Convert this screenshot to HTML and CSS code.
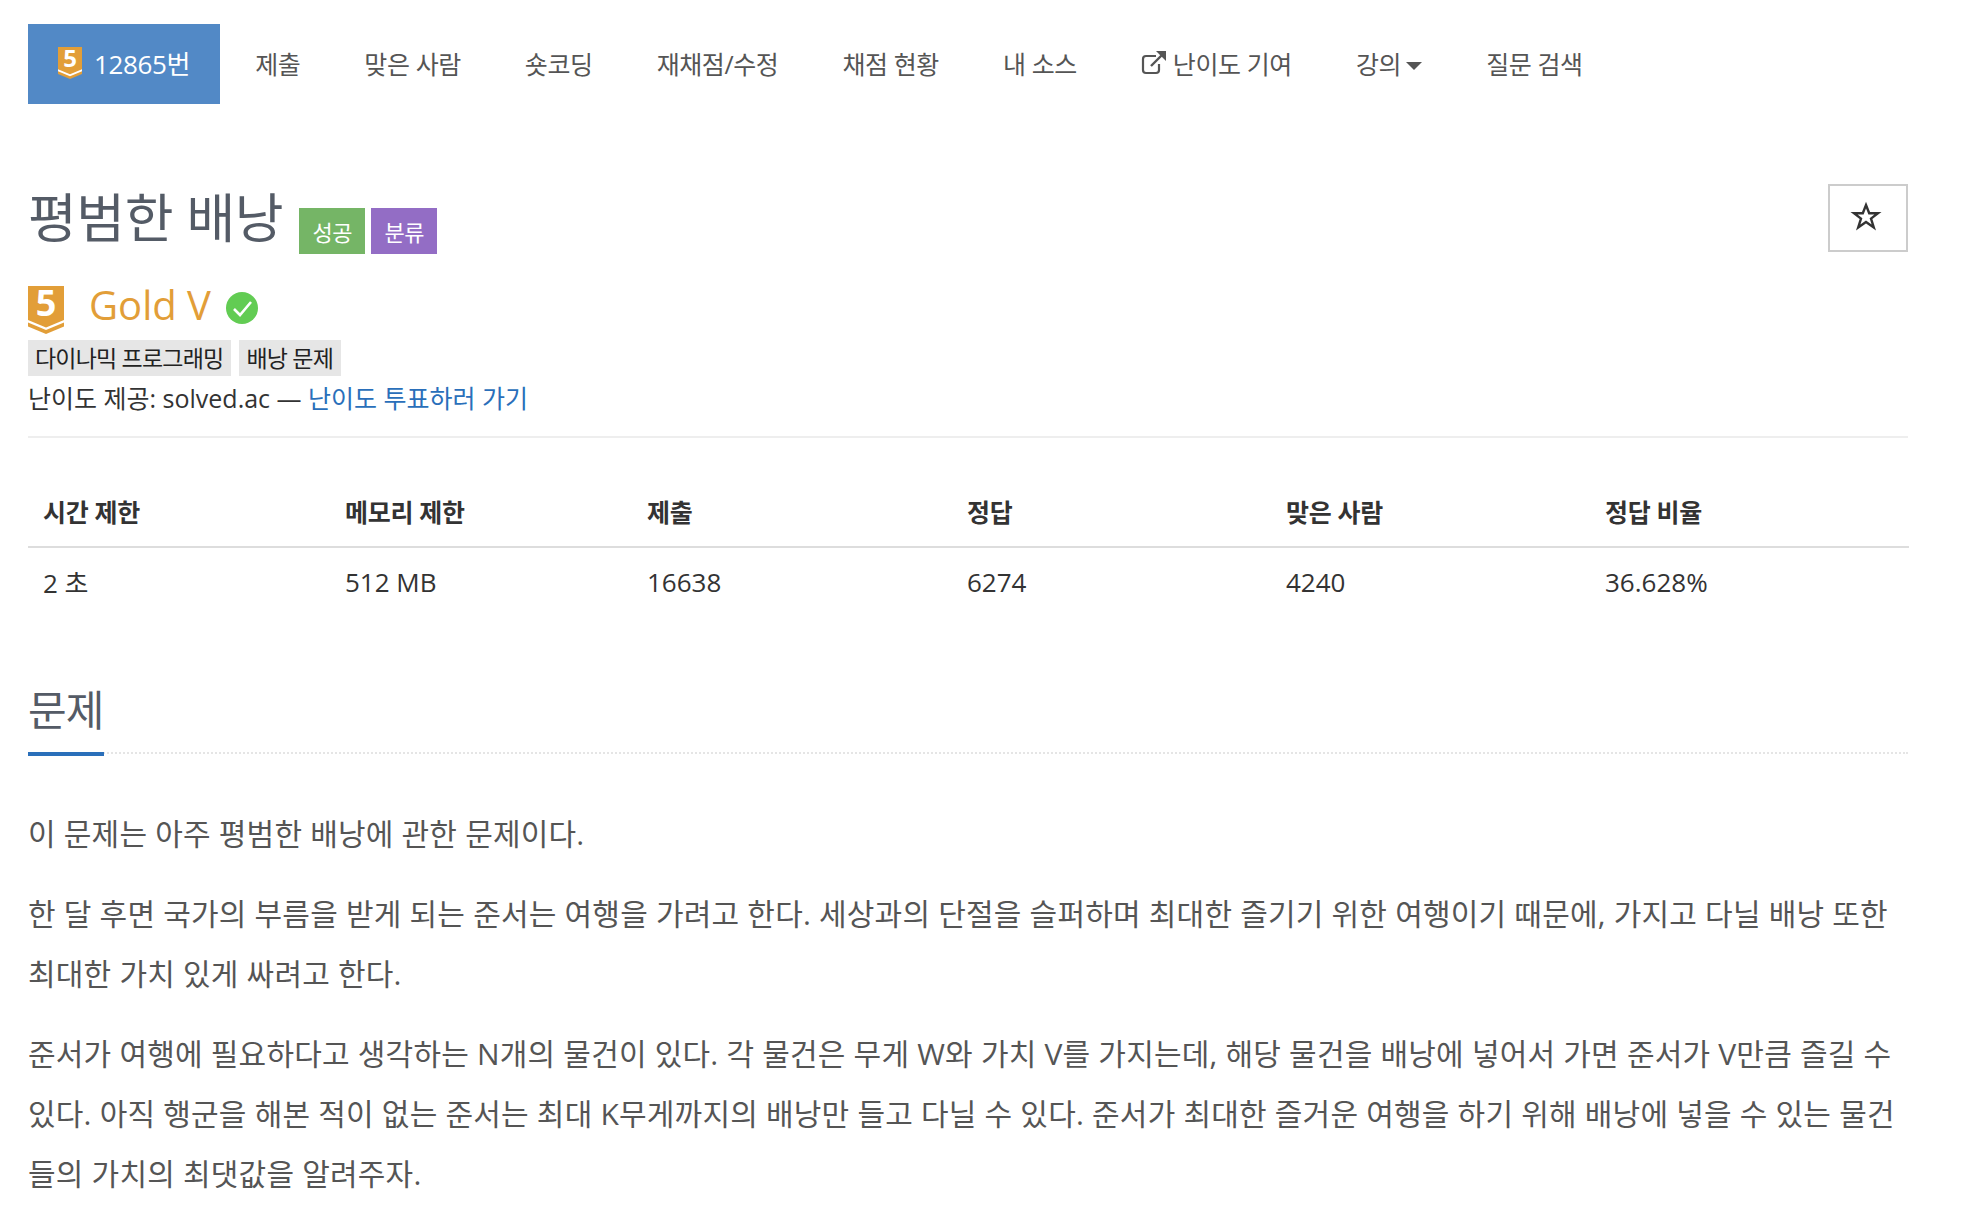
FILE: index.html
```html
<!DOCTYPE html>
<html lang="ko">
<head>
<meta charset="utf-8">
<title>평범한 배낭</title>
<link rel="stylesheet" href="styles.css">
</head>
<body>
<main class="page">
  <nav class="nav">
    <a class="nav-item active">
      <svg class="tier-small" viewBox="0 0 36 48"><path fill="#e29e38" d="M0 0H36V40.5L18 48 0 40.5Z"/><path fill="#fff" d="M0 33.5L18 41 36 33.5V36.5L18 44 0 36.5Z"/><text x="18" y="30" class="tier-num" font-size="36">5</text></svg>
      <span class="problem-id">12865번</span>
    </a>
    <a class="nav-item">제출</a>
    <a class="nav-item">맞은 사람</a>
    <a class="nav-item">숏코딩</a>
    <a class="nav-item">재채점/수정</a>
    <a class="nav-item">채점 현황</a>
    <a class="nav-item">내 소스</a>
    <a class="nav-item">
      <svg class="ext" viewBox="0 0 26 24"><path fill="none" stroke="#555" stroke-width="2.2" d="M15 5H5Q2 5 2 8V19Q2 22 5 22H15Q18 22 18 19V13"/><path fill="none" stroke="#555" stroke-width="2.4" d="M10 15L21 4"/><path fill="#555" d="M15 0H25V10Z"/></svg>
      난이도 기여
    </a>
    <a class="nav-item">강의<span class="caret"></span></a>
    <a class="nav-item">질문 검색</a>
  </nav>

  <header class="title-row">
    <h1 class="title">평범한 배낭</h1>
    <span class="label green">성공</span>
    <span class="label purple">분류</span>
    <button class="star"><svg class="star-icon" viewBox="0 0 30 28"><path fill="none" stroke="#333" stroke-width="2.4" d="M15 3L18.2 11.2H27L20 16.6 22.8 25.4 15 20 7.2 25.4 10 16.6 3 11.2H11.8Z"/></svg></button>
  </header>

  <div class="tier">
    <svg class="tier-big" viewBox="0 0 36 48"><path fill="#e29e38" d="M0 0H36V40.5L18 48 0 40.5Z"/><path fill="#fff" d="M0 34L18 41.5 36 34V36.5L18 44 0 36.5Z"/><text x="18" y="30" class="tier-num" font-size="36">5</text></svg>
    <span class="tier-name">Gold V</span>
    <svg class="check" viewBox="0 0 32 32"><circle cx="16" cy="16" r="16" fill="#62cc53"/><path fill="none" stroke="#fff" stroke-width="2.6" d="M8 17L14 23 25 10"/></svg>
  </div>
  <div class="tags"><span class="tag">다이나믹 프로그래밍</span><span class="tag">배낭 문제</span></div>
  <p class="credit">난이도 제공: solved.ac — <a class="link">난이도 투표하러 가기</a></p>

  <table class="info">
    <thead>
      <tr><th class="c1">시간 제한</th><th class="c1">메모리 제한</th><th class="c3">제출</th><th class="c2">정답</th><th class="c2">맞은 사람</th><th class="c2">정답 비율</th></tr>
    </thead>
    <tbody>
      <tr><td>2 초</td><td>512 MB</td><td>16638</td><td>6274</td><td>4240</td><td>36.628%</td></tr>
    </tbody>
  </table>

  <section class="section">
    <h2 class="section-title"><span class="section-text">문제</span></h2>
    <p class="body-text">이 문제는 아주 평범한 배낭에 관한 문제이다.</p>
    <p class="body-text">한 달 후면 국가의 부름을 받게 되는 준서는 여행을 가려고 한다. 세상과의 단절을 슬퍼하며 최대한 즐기기 위한 여행이기 때문에, 가지고 다닐 배낭 또한 최대한 가치 있게 싸려고 한다.</p>
    <p class="body-text">준서가 여행에 필요하다고 생각하는 N개의 물건이 있다. 각 물건은 무게 W와 가치 V를 가지는데, 해당 물건을 배낭에 넣어서 가면 준서가 V만큼 즐길 수 있다. 아직 행군을 해본 적이 없는 준서는 최대 K무게까지의 배낭만 들고 다닐 수 있다. 준서가 최대한 즐거운 여행을 하기 위해 배낭에 넣을 수 있는 물건들의 가치의 최댓값을 알려주자.</p>
  </section>
</main>
</body>
</html>
```
FILE: styles.css
```css
* { box-sizing: border-box; }
html, body { margin: 0; height: 1228px; overflow: hidden; background: #fff; }
body {
  font-family: "Open Sans", "Noto Sans CJK KR", sans-serif;
  font-size: 24px;
  color: #333;
}
svg { overflow: visible; }
.page { padding: 24px 58px 0 28px; }
.nav { display: flex; height: 80px; font-size: 25px; color: #555; }
.nav-item { display: flex; align-items: center; padding: 0 32px 2px; letter-spacing: -0.4px; white-space: nowrap; }
.nav-item.active { background: #5289c6; color: #fff; padding: 0 30px 2px; margin-right: 3px; }
.problem-id { font-size: 26px; letter-spacing: -0.35px; }
.tier-small { width: 24px; height: 32px; margin-right: 12px; }
.tier-num { fill: #fff; font-family: "Open Sans", sans-serif; font-weight: 700; text-anchor: middle; }
.ext { width: 26px; height: 24px; margin-right: 6px; }
.caret { display: inline-block; width: 0; height: 0; margin: 6px 0 0 5px; border-top: 8px solid #555; border-left: 8px solid transparent; border-right: 8px solid transparent; }
.title-row { display: flex; align-items: flex-end; height: 70px; margin-top: 80px; }
.title { margin: 0 16px 2px 0; font-size: 53px; font-weight: 400; line-height: 68px; color: #545b66; letter-spacing: -0.4px; }
.label { display: flex; align-items: center; justify-content: center; height: 46px; width: 66px; margin: 0 6px 0 0; color: #fff; font-size: 22px; letter-spacing: -0.5px; }
.green { background: #75b566; }
.purple { background: #936dc5; }
.star { display: flex; align-items: center; justify-content: center; margin-left: auto; align-self: flex-start; width: 80px; height: 68px; background: #fff; border: 2px solid #ccc; padding: 0 4px 4px 0; }
.star-icon { width: 30px; height: 28px; }
.tier { display: flex; align-items: flex-start; height: 48px; margin-top: 32px; }
.tier-big { width: 36px; height: 48px; }
.tier-name { margin-left: 25px; font-size: 40px; line-height: 38px; color: #e29e38; }
.check { width: 32px; height: 32px; margin: 6px 0 0 15px; }
.tags { display: flex; gap: 8px; margin-top: 6px; }
.tag { display: flex; align-items: center; height: 36px; padding: 0 8px 2px 7px; background: #e6e6e6; color: #222; font-size: 23px; letter-spacing: -0.8px; }
.credit { margin: 2px 0 0; padding-bottom: 18px; line-height: 40px; border-bottom: 2px solid #eee; font-size: 25px; color: #333; }
.link { color: #2a6fba; }
.info { width: 1880px; margin-top: 32px; border-collapse: collapse; table-layout: fixed; }
.info th, .info td { text-align: left; padding: 0 15px; }
.info th { height: 77px; padding-top: 6px; font-weight: 700; color: #333; border-bottom: 2px solid #ddd; vertical-align: middle; font-size: 25px; letter-spacing: -0.3px; }
.info td { height: 69px; color: #333; font-size: 26px; }
.c1 { width: 302px; }
.c2 { width: 319px; }
.c3 { width: 320px; }
.section { margin-top: 64px; }
.section-title { margin: 0 0 50px; height: 74px; border-bottom: 2px dotted #e5e5e5; font-size: 42px; font-weight: 400; line-height: 60px; color: #545b66; }
.section-text { display: inline-block; height: 76px; width: 76px; border-bottom: 4px solid #2a6fba; letter-spacing: -0.8px; }
.body-text { margin: 0 0 20px; font-size: 30px; line-height: 60px; color: #555; letter-spacing: 0.2px; }
```
